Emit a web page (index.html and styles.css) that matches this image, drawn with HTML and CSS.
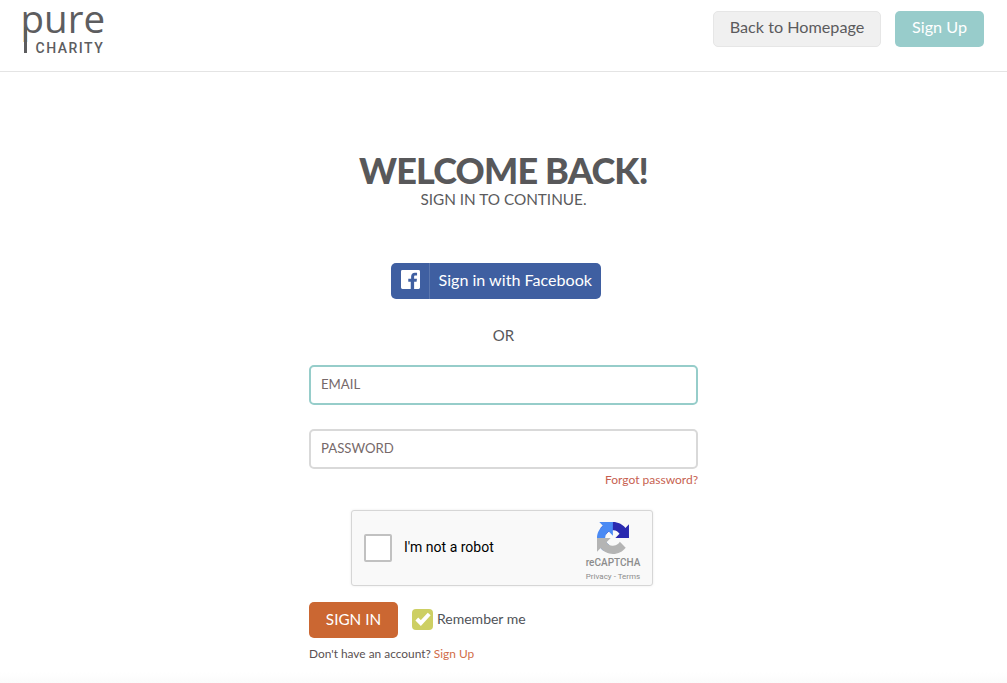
FILE: index.html
```html
<!DOCTYPE html>
<html lang="en">
<head>
<meta charset="utf-8">
<title>Pure Charity - Sign in</title>
<link rel="stylesheet" href="styles.css">
</head>
<body>
<header class="topbar">
  <a class="logo" href="#">
    <span class="logo-pure">pure</span>
    <span class="logo-stem"></span>
    <span class="logo-charity">CHARITY</span>
  </a>
  <nav class="topnav">
    <a class="btn btn-grey" href="#">Back to Homepage</a>
    <a class="btn btn-teal" href="#">Sign Up</a>
  </nav>
</header>
<main class="signin">
  <h1 class="title">WELCOME BACK!</h1>
  <p class="subtitle">SIGN IN TO CONTINUE.</p>
  <a class="fb" href="#">
    <span class="fb-icon">
      <svg width="19" height="19" viewBox="0 0 20 20"><path fill="#fff" d="M1.500 0h17A1.500 1.500 0 0 1 20 1.500v17a1.500 1.500 0 0 1-1.500 1.500h-4.700v-7.700h2.600l.4-3h-3V7.200c0-.9.250-1.450 1.500-1.450h1.600V3.100c-.3 0-1.250-.1-2.350-.1-2.300 0-3.900 1.400-3.900 4v2.300H7.650v3h2.600V20H1.500A1.500 1.500 0 0 1 0 18.500v-17A1.500 1.500 0 0 1 1.500 0z"/></svg>
    </span>
    <span class="fb-text">Sign in with Facebook</span>
  </a>
  <p class="or">OR</p>
  <form class="form">
    <div class="field field-focus">EMAIL</div>
    <div class="field">PASSWORD</div>
    <a class="forgot" href="#">Forgot password?</a>
    <div class="captcha">
      <span class="captcha-box"></span>
      <span class="captcha-label">I'm not a robot</span>
      <div class="captcha-brand">
        <svg width="32" height="32" viewBox="0 0 64 64">
          <path d="M64 31.955l-.033-1.370V4.687l-7.160 7.160C50.948 4.674 42.033.093 32.050.093c-10.400 0-19.622 4.960-25.458 12.640l11.736 11.860a15.550 15.550 0 0 1 4.754-5.334c2.050-1.600 4.952-2.906 8.968-2.906.485 0 .860.057 1.137.163 4.976.393 9.290 3.140 11.830 7.125l-8.307 8.307c10.522-.040 22.400-.066 27.295.005" fill="#2a2ab0"/>
          <path d="M31.862.094l-1.370.033H4.594l7.160 7.160C4.580 13.147 0 22.060 0 32.046c0 10.400 4.960 19.622 12.640 25.458L24.500 45.768a15.550 15.550 0 0 1-5.334-4.754c-1.600-2.050-2.906-4.952-2.906-8.968 0-.485.057-.860.163-1.137.393-4.976 3.140-9.290 7.125-11.830l8.307 8.307c-.040-10.522-.066-22.400.005-27.295" fill="#4a8af4"/>
          <path d="M.001 32.045l.033 1.370v25.898l7.160-7.160c5.860 7.173 14.775 11.754 24.760 11.754 10.400 0 19.622-4.960 25.458-12.640l-11.736-11.860a15.550 15.550 0 0 1-4.754 5.334c-2.050 1.600-4.952 2.906-8.968 2.906-.485 0-.860-.057-1.137-.163-4.976-.393-9.290-3.140-11.830-7.125l8.307-8.307c-10.522.040-22.400.066-27.295-.005" fill="#b4b4b4"/>
        </svg>
        <span class="captcha-name">reCAPTCHA</span>
        <span class="captcha-links">Privacy - Terms</span>
      </div>
    </div>
    <div class="actions">
      <button class="signin-btn" type="button">SIGN IN</button>
      <span class="check">
        <svg width="16" height="14" viewBox="0 0 16 14"><path fill="none" stroke="#fff" stroke-width="4" d="M1.800 7l4 4L14.200 2"/></svg>
      </span>
      <span class="remember">Remember me</span>
    </div>
    <p class="account">Don't have an account? <a href="#">Sign Up</a></p>
  </form>
</main>
</body>
</html>
```
FILE: styles.css
```css
* { box-sizing: border-box; }
html, body { margin: 0; padding: 0; }
body {
  background: linear-gradient(to bottom, #fff 672px, #fbfbfb 683px);
  color: #58585a;
  font-family: "Lato", "Open Sans", sans-serif;
  height: 683px;
  overflow: hidden;
}
a { text-decoration: none; color: inherit; }
p, h1 { margin: 0; }

.topbar {
  height: 72px;
  border-bottom: 1px solid #e4e4e4;
  background: #fff;
  display: flex;
  justify-content: space-between;
  padding: 11px 23px 0;
}
.logo {
  display: flex;
  flex-direction: column;
  color: #5d5d5f;
  position: relative;
  height: 50px;
}
.logo-pure {
  font-family: "Open Sans", sans-serif;
  font-weight: 400;
  font-size: 38.500px;
  line-height: 30px;
  margin: -8px 0 0 -2.500px;
}
.logo-stem {
  position: absolute;
  left: 1px;
  top: 16px;
  width: 3px;
  height: 26px;
  background: #5d5d5f;
}
.logo-charity {
  font-family: "Roboto", sans-serif;
  font-weight: 500;
  font-size: 14px;
  line-height: 14px;
  letter-spacing: 1.500px;
  margin: 8px 0 0 12.500px;
}
.topnav { display: flex; gap: 14px; }
.btn {
  height: 36px;
  border-radius: 5px;
  display: flex;
  align-items: center;
  justify-content: center;
  font-size: 16.200px;
  padding-bottom: 5px;
}
.btn-grey {
  width: 168px;
  background: #f0f0f0;
  border: 1px solid #e6e6e6;
  color: #5b5b5d;
}
.btn-teal {
  width: 89px;
  background: #98cccb;
  color: #fff;
}

.signin {
  width: 389px;
  margin: 0 auto;
  padding-top: 78px;
  display: flex;
  flex-direction: column;
  align-items: center;
}
.title {
  font-size: 36px;
  line-height: 40px;
  font-weight: 900;
  letter-spacing: -0.800px;
  color: #58585a;
}
.subtitle {
  font-size: 15.300px;
  line-height: 20px;
  margin-top: -1px;
  color: #5b5b5d;
}
.fb {
  margin-top: 54px;
  margin-right: 16px;
  width: 210px;
  height: 36px;
  background: #3f5fa1;
  border-radius: 5px;
  color: #fff;
  display: flex;
  align-items: center;
}
.fb-icon {
  width: 39px;
  height: 36px;
  padding: 0 0 3px 1px;
  display: flex;
  align-items: center;
  justify-content: center;
  border-right: 1px solid #5a76ae;
  flex: none;
}
.fb-text {
  font-size: 16.100px;
  margin-left: 9px;
  padding-bottom: 4px;
  white-space: nowrap;
}
.or {
  font-size: 15px;
  line-height: 20px;
  margin-top: 26px;
  color: #58585a;
}
.form {
  width: 100%;
  margin-top: 20px;
  display: flex;
  flex-direction: column;
}
.field {
  height: 40px;
  border: 2px solid #d9d9d9;
  border-radius: 5px;
  padding: 0 0 2px 10px;
  display: flex;
  align-items: center;
  font-size: 13.200px;
  color: #76696a;
  margin-bottom: 24px;
}
.field-focus { border-color: #96cdca; }
.forgot {
  align-self: flex-end;
  font-size: 12px;
  line-height: 14px;
  margin-top: -20px;
  color: #c75f50;
}
.captcha {
  align-self: flex-start;
  margin: 23px 0 0 42px;
  width: 302px;
  height: 76px;
  background: #f9f9f9;
  border: 1px solid #d6d6d6;
  border-radius: 3px;
  box-shadow: 0 0 3px rgba(0, 0, 0, 0.08);
  display: flex;
  align-items: center;
  position: relative;
  font-family: "Roboto", sans-serif;
}
.captcha-box {
  width: 28px;
  height: 28px;
  margin: 0 0 1px 12px;
  background: #fff;
  border: 2px solid #c1c1c1;
  border-radius: 2px;
}
.captcha-label {
  margin: 0 0 2px 12px;
  font-size: 14px;
  color: #000;
}
.captcha-brand {
  position: absolute;
  right: 11px;
  top: 11px;
  width: 56px;
  display: flex;
  flex-direction: column;
  align-items: center;
}
.captcha-name {
  font-size: 10px;
  font-weight: 500;
  color: #8c8c8c;
  line-height: 12px;
  margin-top: 3px;
}
.captcha-links {
  font-size: 8px;
  color: #8c8c8c;
  line-height: 10px;
  margin-top: 3px;
  white-space: nowrap;
}
.actions {
  margin-top: 16px;
  display: flex;
  align-items: center;
}
.signin-btn {
  width: 89px;
  height: 36px;
  border: 0;
  border-radius: 5px;
  background: #cb6732;
  color: #fff;
  font-family: inherit;
  font-size: 15.300px;
  padding: 0 0 2px;
}
.check {
  width: 21px;
  height: 21px;
  margin: 0 0 2px 14px;
  border-radius: 4px;
  background: #cdcf63;
  display: flex;
  align-items: center;
  justify-content: center;
}
.remember {
  font-size: 14px;
  margin: 0 0 4px 4px;
  color: #4f5358;
}
.account {
  font-size: 11.900px;
  line-height: 14px;
  margin-top: 9px;
  color: #5a5052;
}
.account a { color: #d16c47; }
```
